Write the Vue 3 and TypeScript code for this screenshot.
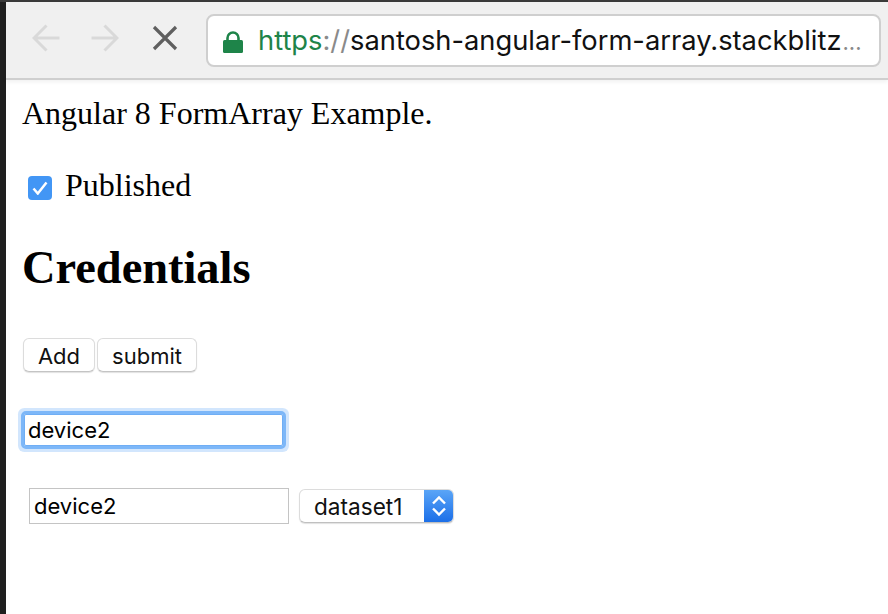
<template>
  <div class="screen">
    <div class="top-edge"></div>
    <div class="window">
      <div class="left-edge"></div>
      <div class="content">
        <header class="toolbar">
          <button class="nav-btn">
            <svg width="28" height="28" viewBox="0 0 28 28"><path d="M27.500 14H2.500M14.500 1.500 2 14 14.500 26.500" fill="none" stroke="#d9d9d9" stroke-width="3" /></svg>
          </button>
          <button class="nav-btn forward">
            <svg width="28" height="28" viewBox="0 0 28 28"><path d="M.5 14h25M13.500 1.500 26 14 13.500 26.500" fill="none" stroke="#d9d9d9" stroke-width="3" /></svg>
          </button>
          <button class="nav-btn stop">
            <svg width="26" height="26" viewBox="0 0 26 26"><path d="M2 2l22 22M24 2 2 24" fill="none" stroke="#5f5f5f" stroke-width="3.200" /></svg>
          </button>
          <div class="omnibox">
            <svg class="lock" width="20" height="22" viewBox="0 0 20 22">
              <path d="M4.500 10V7a5.500 5.500 0 0 1 11 0V10" fill="none" stroke="#1e8449" stroke-width="2.600" />
              <rect x="0" y="9" width="20" height="13" rx="1.500" fill="#1e8449" />
            </svg>
            <span class="url"><span class="scheme">https</span><span class="colon">:</span><span class="slashes">//</span>{{ host }}<span class="dots">...</span></span>
          </div>
        </header>

        <main class="page">
          <p class="title">Angular 8 FormArray Example.</p>
          <label class="published">
            <span class="check">
              <svg width="16" height="14" viewBox="0 0 16 14"><path d="M1.500 7.500 5.800 12.500 14.500 1.500" fill="none" stroke="#fff" stroke-width="2.500" /></svg>
            </span>
            Published
          </label>
          <h2 class="heading">Credentials</h2>
          <div class="actions">
            <button class="btn add">Add</button>
            <button class="btn submit">submit</button>
          </div>
          <input v-model="deviceName" class="focused-input" type="text" />
          <div class="row">
            <input v-model="deviceName" class="plain-input" type="text" />
            <div class="select">
              <span class="select-value">{{ dataset }}</span>
              <span class="select-arrows">
                <svg width="16" height="22" viewBox="0 0 16 22">
                  <path d="M2 8.500 8 2.500l6 6M2 13.500 8 19.500l6-6" fill="none" stroke="#fff" stroke-width="2.400" />
                </svg>
              </span>
            </div>
          </div>
        </main>
      </div>
    </div>
  </div>
</template>

<script setup lang="ts">
import { ref } from 'vue'

const host = 'santosh-angular-form-array.stackblitz'
const deviceName = ref('device2')
const dataset = ref('dataset1')
</script>

<style>
html,
body {
  margin: 0;
  background: #fff;
  overflow: hidden;
}
</style>

<style scoped>
.screen {
  width: 888px;
  height: 614px;
  display: flex;
  flex-direction: column;
  overflow: hidden;
  font-family: "Liberation Serif", serif;
  color: #000;
}

.top-edge {
  height: 2px;
  background: #3a3a3a;
}

.window {
  flex: 1;
  display: flex;
  min-height: 0;
}

.left-edge {
  width: 6px;
  background: #1f1f1f;
}

.content {
  flex: 1;
  min-width: 0;
  display: flex;
  flex-direction: column;
}

.toolbar {
  height: 78px;
  box-sizing: border-box;
  display: flex;
  align-items: center;
  padding: 0 7px 0 26px;
  background: #f0f0f0;
  border-bottom: 2px solid #cfcfcf;
  box-shadow: 0 2px 4px rgba(0, 0, 0, 0.06);
}

.nav-btn {
  display: flex;
  padding: 0;
  margin-bottom: 4px;
  border: none;
  background: none;
}

.forward {
  margin-left: 31px;
}

.stop {
  margin-left: 33px;
}

.omnibox {
  margin-left: 28px;
  flex: 1;
  height: 53px;
  box-sizing: border-box;
  display: flex;
  align-items: center;
  gap: 15px;
  padding: 0 0 0 15px;
  background: #fff;
  border: 2px solid #cfcfcf;
  border-radius: 8px;
  overflow: hidden;
}

.lock {
  flex: none;
  margin-top: 3px;
}

.url {
  font-family: Inter, "Noto Sans", sans-serif;
  font-size: 27.3px;
  white-space: nowrap;
  color: #111;
}

.scheme {
  color: #1e8449;
}

.colon,
.slashes,
.dots {
  color: #8a8a8a;
}

.dots {
  margin-left: 1px;
  font-size: 22px;
}

.page {
  padding: 14px 0 0 16px;
}

.title {
  margin: 0;
  font-size: 32px;
  line-height: 38px;
}

.published {
  display: flex;
  align-items: center;
  gap: 13px;
  margin: 34px 0 0 6px;
  font-size: 32px;
  line-height: 38px;
}

.check {
  width: 24px;
  height: 24px;
  margin-top: 5px;
  display: flex;
  align-items: center;
  justify-content: center;
  background: #4296f5;
  border-radius: 4px;
}

.heading {
  margin: 36px 0 0;
  font-size: 46.4px;
  line-height: 56px;
  font-weight: 700;
}

.actions {
  display: flex;
  gap: 2px;
  margin: 42px 0 0 1px;
}

.btn {
  height: 34px;
  padding: 1px 0 0;
  background: #fff;
  border: 1px solid #dcdcdc;
  border-bottom-color: #c4c4c4;
  border-radius: 6px;
  box-shadow: 0 1px 1px rgba(0, 0, 0, 0.12);
  font-family: Inter, "Noto Sans", sans-serif;
  font-size: 22px;
  color: #111;
}

.add {
  width: 72px;
}

.submit {
  width: 100px;
}

.focused-input {
  display: block;
  width: 259px;
  height: 32px;
  box-sizing: border-box;
  margin: 42px 0 0 2px;
  padding: 0 3px;
  background: #fff;
  border: 1px solid #6faef5;
  outline: 3px solid #7db7f8;
  box-shadow: 0 0 0 6px rgba(125, 183, 248, 0.35);
  border-radius: 2px;
  font-family: Inter, "Noto Sans", sans-serif;
  font-size: 22px;
  color: #000;
}

.row {
  display: flex;
  align-items: center;
  gap: 10px;
  margin: 42px 0 0 7px;
}

.plain-input {
  width: 260px;
  height: 36px;
  box-sizing: border-box;
  padding: 0 4px;
  background: #fff;
  border: 1px solid #c4c4c4;
  font-family: Inter, "Noto Sans", sans-serif;
  font-size: 22px;
  color: #000;
}

.select {
  width: 155px;
  height: 34px;
  box-sizing: border-box;
  display: flex;
  align-items: center;
  justify-content: space-between;
  background: #fff;
  border: 1px solid #dcdcdc;
  border-bottom-color: #c0c0c0;
  border-radius: 6px;
  box-shadow: 0 1px 1px rgba(0, 0, 0, 0.12);
  overflow: hidden;
  font-family: Inter, "Noto Sans", sans-serif;
  font-size: 22.6px;
}

.select-value {
  padding-left: 14px;
  color: #111;
}

.select-arrows {
  width: 29px;
  align-self: stretch;
  display: flex;
  align-items: center;
  justify-content: center;
  background: linear-gradient(#5aa5f7, #1c6fe8);
}
</style>
